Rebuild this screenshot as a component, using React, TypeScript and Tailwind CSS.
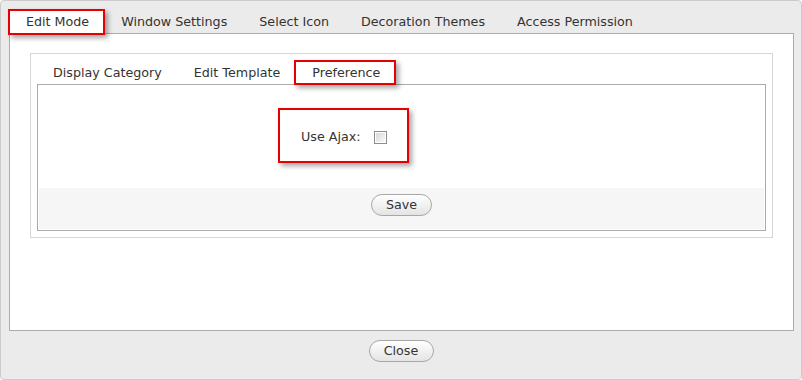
import React from 'react';

const topTabs = ['Edit Mode', 'Window Settings', 'Select Icon', 'Decoration Themes', 'Access Permission'];
const subTabs = ['Display Category', 'Edit Template', 'Preference'];

function Marker({ className }: { className: string }) {
  return (
    <div className={`absolute border-2 border-[#e60000] shadow-[3px_3px_5px_rgba(0,0,0,0.35)] pointer-events-none ${className}`} />
  );
}

function PillButton({ label, width }: { label: string; width: string }) {
  return (
    <button
      className={`${width} h-[22px] rounded-[11px] border border-[#a8a8a8] bg-linear-to-b from-white to-[#e4e4e4] text-[12.7px] leading-[20px] text-[#333]`}
    >
      {label}
    </button>
  );
}

export default function App() {
  return (
    <div className="relative w-[802px] h-[380px] font-['DejaVu_Sans',sans-serif] text-[12.7px] text-[#333]">
      <div className="w-full h-full bg-[#ebebeb] border border-[#cbcbcb] rounded-[4px] flex flex-col">
        {/* Top tabs */}
        <div className="flex pl-[9px] pt-[9px] h-[32px]">
          {topTabs.map((t, i) => (
            <div
              key={t}
              className={`px-4 h-[23px] leading-[24px] whitespace-nowrap ${i === 0 ? 'bg-white' : ''}`}
            >
              {t}
            </div>
          ))}
        </div>

        {/* Main panel */}
        <div className="ml-[8px] w-[785px] h-[298px] bg-white border border-[#ababab] pl-[20px] pt-[19px]">
          <div className="w-[743px] h-[185px] border border-[#d6d6d6] px-[6px] pb-[6px] pt-[8px] flex flex-col">
            <div className="flex h-[22px]">
              {subTabs.map(t => (
                <div key={t} className="px-4 h-[22px] leading-[21px] whitespace-nowrap">
                  {t}
                </div>
              ))}
            </div>
            <div className="h-[147px] border border-[#ababab] p-[1px] flex flex-col">
              <div className="h-[102px] flex items-center pl-[262px]">
                <span className="leading-[16px]">Use Ajax:</span>
                <span className="ml-[13px] w-[13px] h-[13px] border border-[#8c8c8c] p-[1px] bg-white">
                  <span className="block w-full h-full bg-linear-to-br from-[#d8d8d8] to-[#f9f9f9]" />
                </span>
              </div>
              <div className="flex-1 bg-[#f6f6f6] flex justify-center pt-[6px]">
                <PillButton label="Save" width="w-[61px]" />
              </div>
            </div>
          </div>
        </div>

        {/* Footer */}
        <div className="flex-1 flex justify-center pt-[9px]">
          <PillButton label="Close" width="w-[65px]" />
        </div>
      </div>

      <Marker className="left-[8px] top-[9px] w-[97px] h-[26px]" />
      <Marker className="left-[294px] top-[60px] w-[102px] h-[25px]" />
      <Marker className="left-[278px] top-[108px] w-[131px] h-[55px]" />
    </div>
  );
}
